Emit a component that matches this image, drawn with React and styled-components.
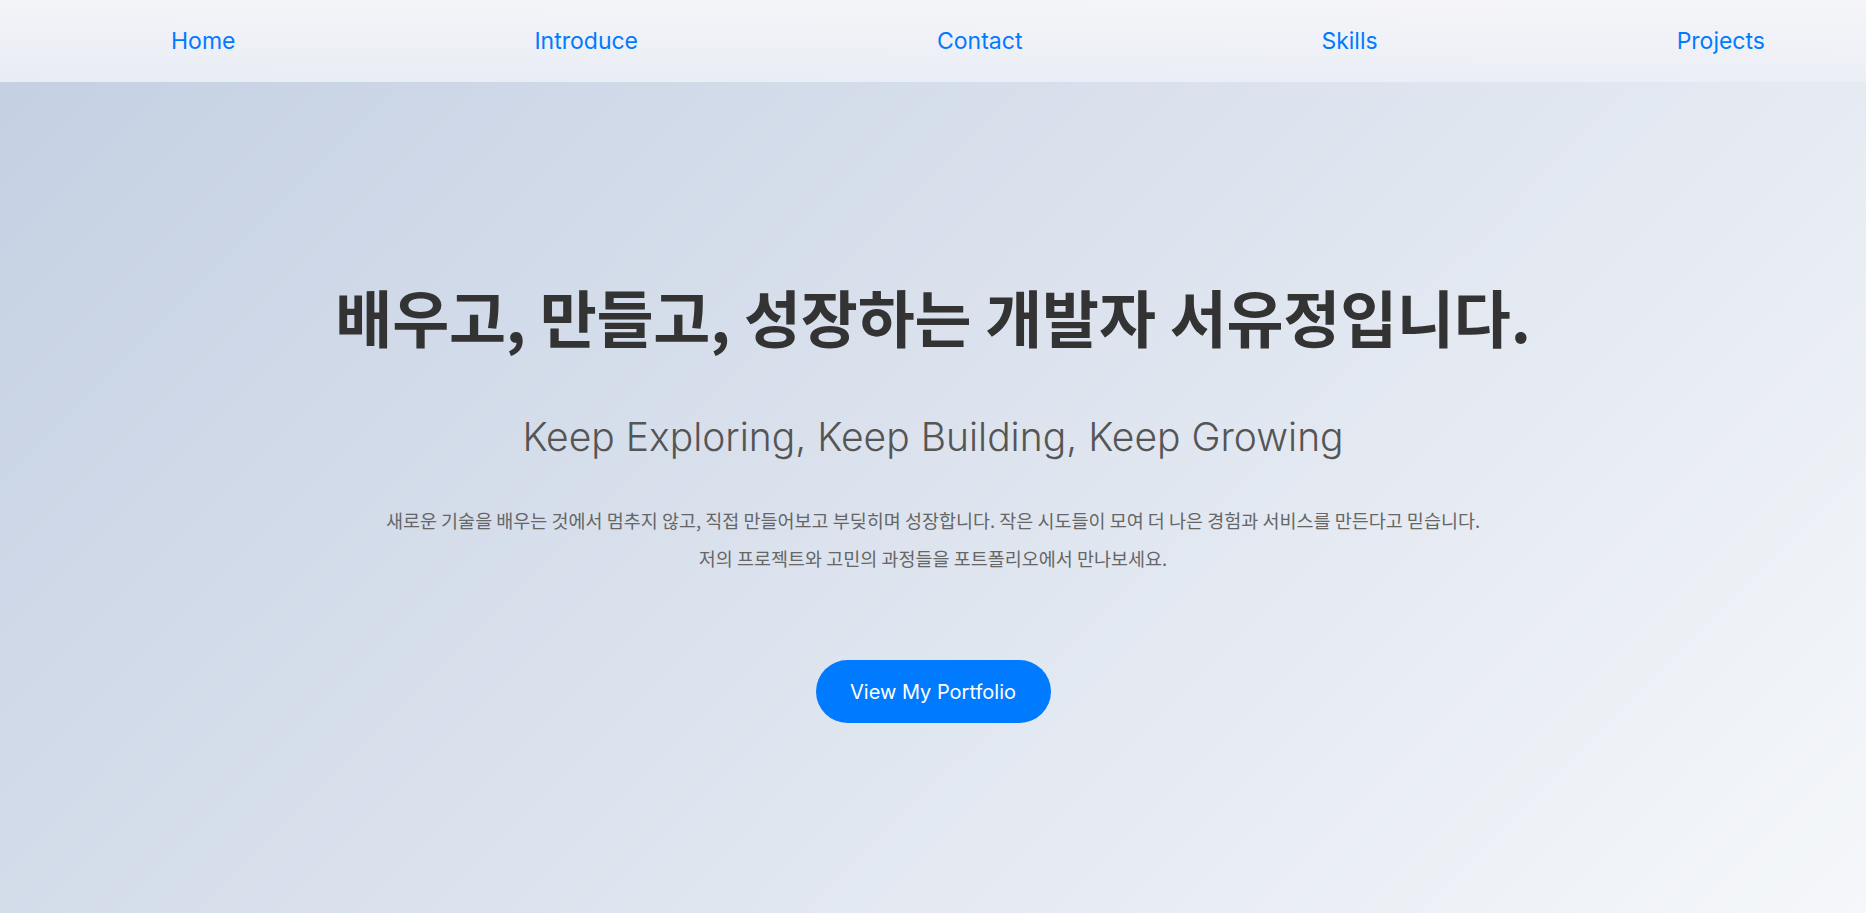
import React from "react";
import styled, { createGlobalStyle } from "styled-components";

const GlobalStyle = createGlobalStyle`
  html, body {
    margin: 0;
    padding: 0;
  }
  body {
    font-family: Inter, "Noto Sans CJK KR", sans-serif;
  }
  * {
    box-sizing: border-box;
  }
`;

const Page = styled.div`
  min-height: 100vh;
  display: flex;
  flex-direction: column;
  background: linear-gradient(135deg, #c3cfe2 0%, #f5f7fa 100%);
`;

const Nav = styled.nav`
  height: 82px;
  display: flex;
  align-items: center;
  justify-content: space-between;
  padding: 0 101px 0 171px;
  background: linear-gradient(180deg, rgba(246, 246, 249, 0.95) 0%, rgba(236, 239, 246, 0.9) 100%);
`;

const NavLink = styled.a`
  font-family: Inter, sans-serif;
  font-size: 23px;
  font-weight: 400;
  color: #007bff;
  text-decoration: none;
  cursor: pointer;
`;

const Hero = styled.main`
  flex: 1;
  display: flex;
  flex-direction: column;
  align-items: center;
  text-align: center;
  padding-top: 197px;
`;

const Title = styled.h1`
  margin: 0;
  font-family: "Noto Sans CJK KR", sans-serif;
  font-size: 62px;
  font-weight: 700;
  letter-spacing: -0.2px;
  line-height: 1.2;
  color: #333;
`;

const Subtitle = styled.h2`
  margin: 60px 0 0;
  font-family: Inter, sans-serif;
  font-size: 39px;
  font-weight: 300;
  color: #555;
`;

const Description = styled.p`
  margin: 41px 0 0;
  font-family: "Noto Sans CJK KR", sans-serif;
  font-size: 18.5px;
  line-height: 38px;
  color: #666;
`;

const Button = styled.button`
  margin-top: 83px;
  width: 235px;
  height: 63px;
  border: none;
  border-radius: 32px;
  background: #007bff;
  color: #fff;
  font-family: Inter, sans-serif;
  font-size: 20px;
  cursor: pointer;
`;

const links = ["Home", "Introduce", "Contact", "Skills", "Projects"];

const App = () => {
  return (
    <Page>
      <GlobalStyle />
      <Nav>
        {links.map(link => (
          <NavLink key={link}>{link}</NavLink>
        ))}
      </Nav>
      <Hero>
        <Title>배우고, 만들고, 성장하는 개발자 서유정입니다.</Title>
        <Subtitle>Keep Exploring, Keep Building, Keep Growing</Subtitle>
        <Description>
          새로운 기술을 배우는 것에서 멈추지 않고, 직접 만들어보고 부딪히며 성장합니다. 작은 시도들이 모여 더 나은 경험과 서비스를 만든다고 믿습니다.
          <br />
          저의 프로젝트와 고민의 과정들을 포트폴리오에서 만나보세요.
        </Description>
        <Button>View My Portfolio</Button>
      </Hero>
    </Page>
  );
};

export default App;
